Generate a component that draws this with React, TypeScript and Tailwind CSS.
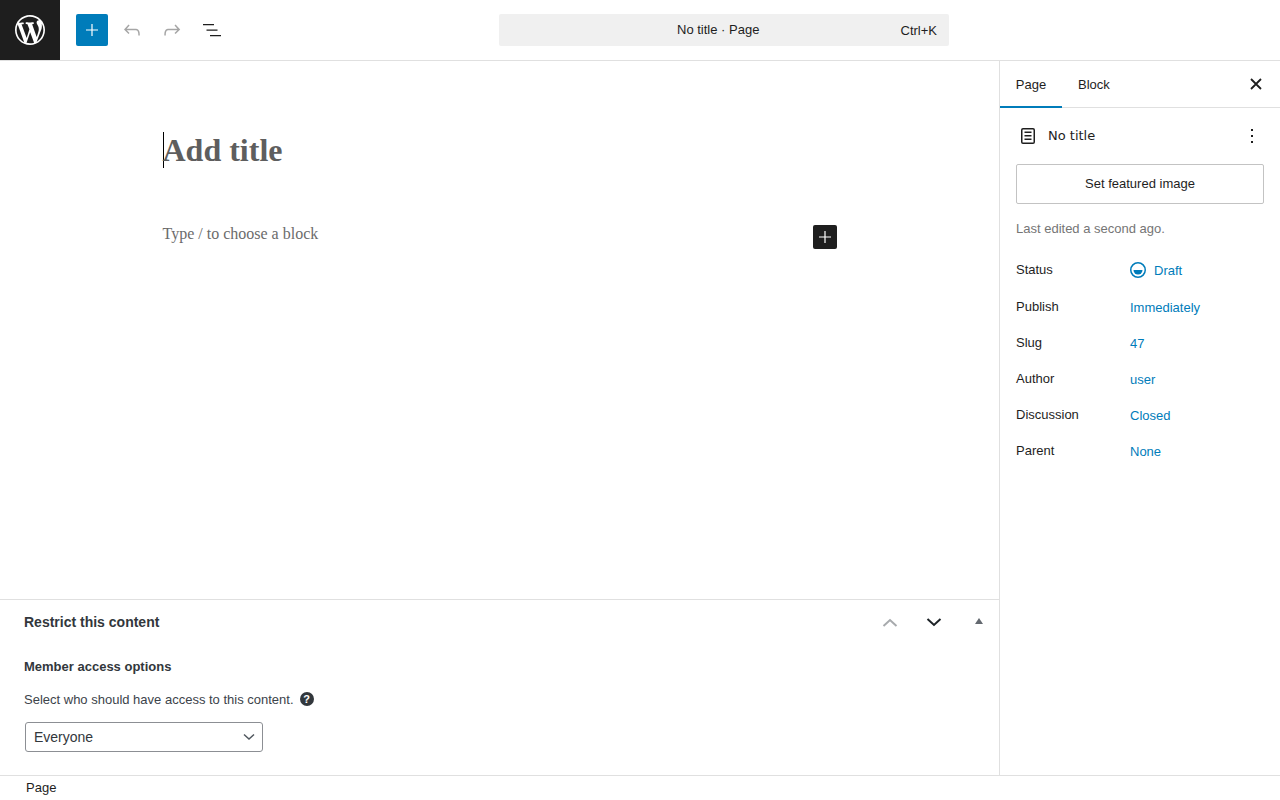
const Plus = ({ className }: { className?: string }) => (
  <svg viewBox="0 0 24 24" className={className} fill="currentColor">
    <path d="M18 11.4h-5.4V6h-1.2v5.4H6v1.2h5.4V18h1.2v-5.4H18z" />
  </svg>
);

const metaRows = [
  { label: "Publish", value: "Immediately", top: "mt-[16px]" },
  { label: "Slug", value: "47", top: "mt-[14px]" },
  { label: "Author", value: "user", top: "mt-[14px]" },
  { label: "Discussion", value: "Closed", top: "mt-[14px]" },
  { label: "Parent", value: "None", top: "mt-[14px]" }
];

export default function App() {
  return (
    <div className="flex h-screen flex-col overflow-hidden bg-white font-['Liberation_Sans',Arial,sans-serif] text-[13px] text-[#1e1e1e]">
      {/* Top bar */}
      <header className="flex h-[61px] shrink-0 border-b border-[#e0e0e0]">
        <div className="flex h-[60px] w-[60px] items-center justify-center bg-[#1e1e1e] text-white">
          <svg viewBox="0 0 20 20" className="h-[30px] w-[30px]" fill="currentColor">
            <path d="M20 10c0-5.51-4.49-10-10-10C4.48 0 0 4.49 0 10c0 5.52 4.48 10 10 10 5.51 0 10-4.48 10-10zM7.78 15.37L4.37 6.22c.55-.02 1.17-.08 1.17-.08.5-.06.44-1.13-.06-1.11 0 0-1.45.11-2.37.11-.18 0-.37 0-.58-.01C4.12 2.69 6.87 1.11 10 1.11c2.33 0 4.45.87 6.05 2.34-.68-.11-1.65.39-1.65 1.58 0 .74.45 1.36.9 2.1.35.61.55 1.36.55 2.46 0 1.49-1.4 5-1.4 5l-3.03-8.37c.54-.02.82-.17.82-.17.5-.05.44-1.25-.06-1.22 0 0-1.44.12-2.38.12-.87 0-2.33-.12-2.33-.12-.5-.03-.56 1.2-.06 1.22l.92.08 1.26 3.41zM17.41 10c.24-.64.74-1.87.43-4.25.7 1.29 1.05 2.71 1.05 4.25 0 3.29-1.73 6.24-4.4 7.78.97-2.59 1.94-5.2 2.92-7.78zM6.1 18.09C3.12 16.65 1.11 13.53 1.11 10c0-1.3.23-2.48.72-3.59C3.25 10.3 4.67 14.2 6.1 18.09zm4.03-6.63l2.58 6.98c-.86.29-1.76.45-2.71.45-.79 0-1.57-.11-2.29-.33.81-2.38 1.62-4.74 2.42-7.1z" />
          </svg>
        </div>
        <div className="ml-4 flex h-[60px] items-center">
          <button className="flex h-8 w-8 items-center justify-center rounded-[2px] bg-[#007cba] text-white">
            <Plus className="h-6 w-6" />
          </button>
          <button className="ml-[8px] flex h-8 w-8 items-center justify-center text-[#a6a6a6]">
            <svg viewBox="0 0 24 24" className="h-6 w-6" fill="currentColor">
              <path d="M18.3 11.7c-.6-.6-1.4-.9-2.3-.9H6.7l2.9-3.3-1.1-1-4.5 5L8.5 16l1-1-2.7-2.7H16c.5 0 .9.2 1.3.5 1 1 1 3.4 1 4.5v.3h1.5v-.2c0-1.5 0-4.3-1.5-5.7z" />
            </svg>
          </button>
          <button className="ml-[8px] flex h-8 w-8 items-center justify-center text-[#a6a6a6]">
            <svg viewBox="0 0 24 24" className="h-6 w-6" fill="currentColor">
              <path d="M15.6 6.5l-1.1 1 2.9 3.3H8c-.9 0-1.7.3-2.3.9-1.4 1.5-1.4 4.2-1.4 5.6v.2h1.5v-.3c0-1.1 0-3.5 1-4.5.3-.3.7-.5 1.3-.5h9.2L14.5 15l1.1 1.1 4.6-4.6-4.6-5z" />
            </svg>
          </button>
          <button className="ml-[8px] flex h-8 w-8 items-center justify-center">
            <svg viewBox="0 0 24 24" className="h-6 w-6" fill="currentColor">
              <path d="M3 6h11v1.2H3V6zm3.5 5.5h11v1.2h-11v-1.2zM21 17H10v1.2h11V17z" />
            </svg>
          </button>
        </div>
        <div className="ml-[271px] mt-[14px] flex h-8 w-[450px] items-center rounded-[2px] bg-[#f0f0f0] pl-[178px] pr-3">
          <span>No title · Page</span>
          <span className="ml-auto mt-px">Ctrl+K</span>
        </div>
      </header>

      <div className="flex min-h-0 flex-1">
        {/* Editor */}
        <main className="flex min-w-0 flex-1 flex-col">
          <div className="flex-1">
            <div className="mx-auto w-[674px] pt-[71px] font-['Liberation_Serif','Times_New_Roman',serif]">
              <h1 className="flex h-[36px] items-center border-l border-black text-[32px] leading-[36px] font-bold text-[#5e5e5e]">
                <span className="-ml-px">Add title</span>
              </h1>
              <div className="mt-[57px] flex h-[24px] items-start justify-between">
                <p className="text-[16px] leading-[18px] text-[#6b6b6b]">Type / to choose a block</p>
                <button className="flex h-6 w-6 items-center justify-center rounded-[2px] bg-[#1e1e1e] text-white">
                  <Plus className="h-6 w-6" />
                </button>
              </div>
            </div>
          </div>

          {/* Meta box */}
          <section className="h-[176px] shrink-0 border-t border-[#e0e0e0] text-[#32373c]">
            <div className="flex h-[45px] items-center pl-6">
              <h2 className="text-[14px] font-bold">Restrict this content</h2>
              <div className="ml-auto flex items-center">
                <svg viewBox="0 0 16 9" className="h-[9px] w-4 text-[#a7aaad]" fill="none" stroke="currentColor" strokeWidth="2">
                  <path d="M1.5 8l6.5-6 6.5 6" />
                </svg>
                <svg viewBox="0 0 16 9" className="ml-7 h-[9px] w-4 text-[#1d2327]" fill="none" stroke="currentColor" strokeWidth="2">
                  <path d="M1.5 1l6.5 6 6.5-6" />
                </svg>
                <svg viewBox="0 0 8 6" className="ml-[33px] mr-4 mb-[3px] h-[6px] w-2 text-[#646970]" fill="currentColor">
                  <path d="M4 0l4 6H0z" />
                </svg>
              </div>
            </div>
            <div className="pl-6">
              <p className="mt-[12px] font-bold">Member access options</p>
              <p className="mt-[13px] flex items-center text-[#3c434a]">
                Select who should have access to this content.
                <span className="ml-[6px] flex h-[14px] w-[14px] items-center justify-center rounded-full bg-[#32373c] text-[11px] leading-none font-bold text-white">?</span>
              </p>
              <div className="ml-px mt-[13px] flex h-[30px] w-[238px] items-center justify-between rounded-[3px] border border-[#8c8f94] pl-2 pr-[7px] text-[14px]">
                <span>Everyone</span>
                <svg viewBox="0 0 12 8" className="h-2 w-3 text-[#50575e]" fill="none" stroke="currentColor" strokeWidth="1.5">
                  <path d="M1 1.5l5 4.5 5-4.5" />
                </svg>
              </div>
            </div>
          </section>
        </main>

        {/* Sidebar */}
        <aside className="w-[281px] shrink-0 border-l border-[#e0e0e0]">
          <div className="flex h-[47px] items-center border-b border-[#e0e0e0]">
            <div className="flex h-[47px] w-[62px] items-center justify-center border-b-2 border-[#007cba] pt-[4px]">Page</div>
            <div className="ml-4 pt-px">Block</div>
            <button className="ml-auto mr-[18px]">
              <svg viewBox="0 0 12 12" className="h-3 w-3" fill="none" stroke="currentColor" strokeWidth="1.8">
                <path d="M1 1l10 10M11 1L1 11" />
              </svg>
            </button>
          </div>
          <div className="px-4">
            <div className="mt-4 flex h-6 items-center">
              <svg viewBox="0 0 24 24" className="h-6 w-6" fill="currentColor">
                <path d="M15.5 7.5h-7V9h7V7.5Zm-7 3.5h7v1.5h-7V11Zm7 3.5h-7V16h7v-1.5Z" />
                <path fillRule="evenodd" clipRule="evenodd" d="M17 4H7a2 2 0 0 0-2 2v12a2 2 0 0 0 2 2h10a2 2 0 0 0 2-2V6a2 2 0 0 0-2-2Zm0 1.5H7a.5.5 0 0 0-.5.5v12a.5.5 0 0 0 .5.5h10a.5.5 0 0 0 .5-.5V6a.5.5 0 0 0-.5-.5Z" />
              </svg>
              <span className="ml-2 font-['DejaVu_Sans',sans-serif]">No title</span>
              <svg viewBox="0 0 24 24" className="ml-auto h-6 w-6" fill="currentColor">
                <path d="M13 19h-2v-2h2v2zm0-6h-2v-2h2v2zm0-6h-2V5h2v2z" />
              </svg>
            </div>
            <button className="mt-4 flex h-10 w-full items-center justify-center rounded-[2px] border border-[#c3c3c3]">
              Set featured image
            </button>
            <p className="mt-[15px] text-[#757575]">Last edited a second ago.</p>
            <div className="mt-[22px] flex h-[20px] items-center">
              <span className="-mt-[2px] w-[114px]">Status</span>
              <span className="flex items-center text-[#007cba]">
                <svg viewBox="0 0 16 16" className="mb-[2px] h-4 w-4" fill="currentColor">
                  <circle cx="8" cy="8" r="7.25" fill="none" stroke="currentColor" strokeWidth="1.5" />
                  <path d="M3.5 8h9a4.5 4.5 0 0 1-9 0z" />
                </svg>
                <span className="ml-2">Draft</span>
              </span>
            </div>
            {metaRows.map((row) => (
              <div key={row.label} className={`flex h-[22px] items-center ${row.top}`}>
                <span className="-mt-[2px] w-[114px]">{row.label}</span>
                <span className="text-[#007cba]">{row.value}</span>
              </div>
            ))}
          </div>
        </aside>
      </div>

      {/* Footer */}
      <footer className="flex h-[25px] shrink-0 items-center border-t border-[#e0e0e0] pl-[26px]">Page</footer>
    </div>
  );
}
